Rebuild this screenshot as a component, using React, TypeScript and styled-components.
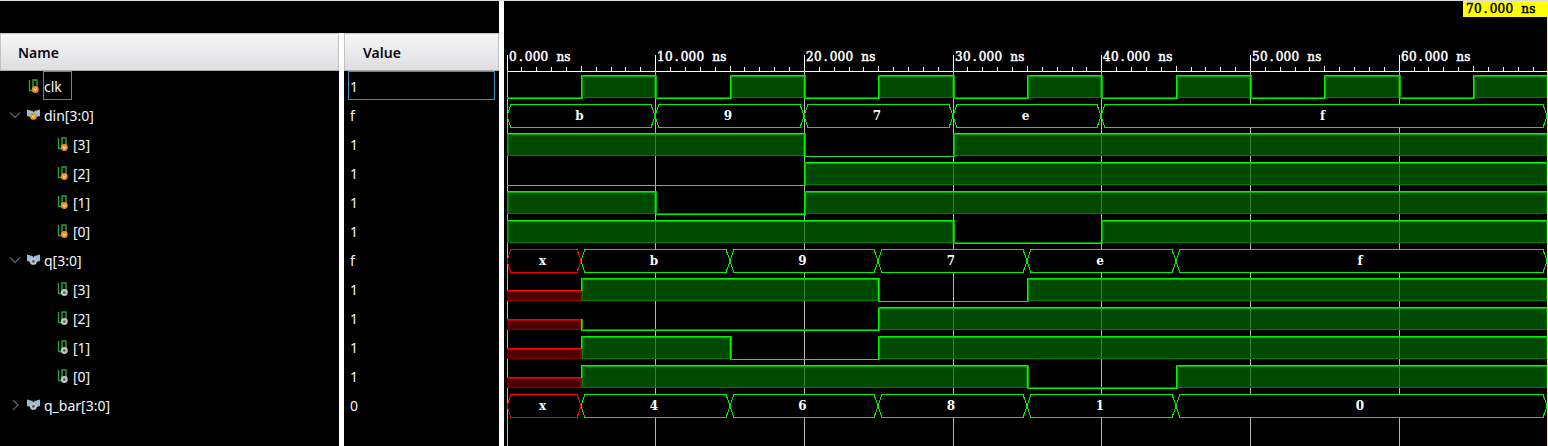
import { FC } from "react";
import styled, { createGlobalStyle } from "styled-components";

const GlobalStyle = createGlobalStyle`
  html, body {
    margin: 0;
    padding: 0;
    background: #000;
  }
`;

const Page = styled.div`
  display: flex;
  width: 1548px;
  height: 446px;
  box-sizing: border-box;
  border-top: 1px solid #dcdcdc;
  background: #000;
  overflow: hidden;
  font-family: "Noto Sans", "Open Sans", sans-serif;
`;

const TablePane = styled.div`
  display: flex;
  flex-direction: column;
  width: 499px;
  flex: none;
`;

const TopGap = styled.div`
  height: 32px;
  flex: none;
`;

const Columns = styled.div`
  display: flex;
  flex: 1;
`;

const Divider = styled.div`
  width: 5px;
  flex: none;
  background: #fff;
`;

const NameColumn = styled.div`
  width: 339px;
  flex: none;
`;

const ValueColumn = styled.div`
  width: 155px;
  flex: none;
`;

const HeaderCell = styled.div<{ $pad: number }>`
  display: flex;
  align-items: center;
  height: 38px;
  box-sizing: border-box;
  padding-left: ${({ $pad }) => $pad}px;
  border: 1px solid #c4c4c4;
  border-bottom-color: #a8a8a8;
  background: linear-gradient(180deg, #f6f6f6 0%, #dedee2 100%);
  color: #0a0a14;
  font-size: 14px;
  font-weight: 600;
`;

const Row = styled.div<{ $indent: number }>`
  display: flex;
  align-items: center;
  height: 29px;
  padding-left: ${({ $indent }) => $indent}px;
  color: #f2f6ff;
  font-size: 14px;
`;

const Caret = styled.svg`
  width: 14px;
  height: 14px;
  margin-left: 8px;
  margin-right: 4px;
  flex: none;
`;

const SignalGlyph = styled.svg`
  width: 14px;
  height: 16px;
  margin-right: 3px;
  flex: none;
`;

const NameText = styled.span<{ $selected?: boolean }>`
  display: flex;
  align-items: center;
  height: 29px;
  box-sizing: border-box;
  padding: 2px 0 0 0;
  min-width: 29px;
  border: 1px solid ${({ $selected }) => ($selected ? "#3f8fc9" : "transparent")};
`;

const ValueCell = styled.div<{ $selected?: boolean }>`
  display: flex;
  align-items: center;
  height: 29px;
  box-sizing: border-box;
  width: 147px;
  margin-left: 4px;
  padding: 2px 0 0 1px;
  color: #f2f6ff;
  font-size: 14px;
  border: 1px solid ${({ $selected }) => ($selected ? "#3f8fc9" : "transparent")};
`;

const WavePane = styled.div`
  flex: 1;
`;

const WaveSvg = styled.svg`
  display: block;
  width: 1044px;
  height: 445px;
`;

const WaveText = styled.text<{ $dark?: boolean; $bold?: boolean }>`
  font-family: "DejaVu Serif", "Liberation Mono", serif;
  font-size: 12px;
  font-weight: ${({ $bold }) => ($bold ? 700 : 400)};
  fill: ${({ $dark }) => ($dark ? "#000" : "#fff")};
  stroke: ${({ $dark }) => ($dark ? "#000" : "#fff")};
  stroke-width: ${({ $bold }) => ($bold ? 0 : 0.5)}px;
`;

type Kind = "scalar" | "bus";
type Tone = "input" | "output";
interface SignalRow {
  name: string;
  value: string;
  kind: Kind;
  tone: Tone;
  caret?: "open" | "closed";
  selected?: boolean;
}

const rows: SignalRow[] = [
  { name: "clk", value: "1", kind: "scalar", tone: "input", selected: true },
  { name: "din[3:0]", value: "f", kind: "bus", tone: "input", caret: "open" },
  { name: "[3]", value: "1", kind: "scalar", tone: "input" },
  { name: "[2]", value: "1", kind: "scalar", tone: "input" },
  { name: "[1]", value: "1", kind: "scalar", tone: "input" },
  { name: "[0]", value: "1", kind: "scalar", tone: "input" },
  { name: "q[3:0]", value: "f", kind: "bus", tone: "output", caret: "open" },
  { name: "[3]", value: "1", kind: "scalar", tone: "output" },
  { name: "[2]", value: "1", kind: "scalar", tone: "output" },
  { name: "[1]", value: "1", kind: "scalar", tone: "output" },
  { name: "[0]", value: "1", kind: "scalar", tone: "output" },
  { name: "q_bar[3:0]", value: "0", kind: "bus", tone: "output", caret: "closed" },
];

const Badge: FC<{ tone: Tone; cx: number; cy: number }> = ({ tone, cx, cy }) => (
  <g>
    <circle cx={cx} cy={cy} r={3.4} fill={tone === "input" ? "#ee8f1e" : "#c4c4c4"} />
    {tone === "input" ? (
      <path d={`M${cx - 1.3} ${cy - 1}l1.3 2.4l1.3-2.4`} fill="none" stroke="#fff2d0" strokeWidth={0.9} />
    ) : (
      <circle cx={cx} cy={cy} r={1.3} fill="#555" />
    )}
  </g>
);

const SignalIcon: FC<{ kind: Kind; tone: Tone }> = ({ kind, tone }) => (
  <SignalGlyph viewBox="0 0 14 16">
    {kind === "scalar" ? (
      <>
        <path d="M3.5 2V12.5H7V2H11V9" fill="none" stroke="#2f9f45" strokeWidth={1.4} />
        <Badge tone={tone} cx={9.3} cy={11.5} />
      </>
    ) : (
      <>
        <path d="M1 2.5L6.5 4L7.5 5.5L8.5 4L14 2.5V9L8.5 10.5H6.5L1 9Z" fill="#93bfd8" />
        <Badge tone={tone} cx={7.4} cy={9.4} />
      </>
    )}
  </SignalGlyph>
);

const tx = (ns: number) => Math.floor(507 + ns * 14.87);
const rowTop = (n: number) => 75 + 29 * n;

type Level = "0" | "1" | "x";
type Seg = [number, number, Level];

const BRIGHT = "#00f400";
const SOFT = "#00b400";
const DARK = "#007c00";

// low lines that came out thinner in the capture
const thinLow = [2, 3, 7, 9];

const BitWave: FC<{ n: number; segs: Seg[] }> = ({ n, segs }) => {
  const top = rowTop(n);
  const low = top + 23;
  const mid = top + 12;
  const levelY = (l: Level) => (l === "1" ? top : l === "x" ? mid : low);
  const thin = thinLow.includes(n);
  return (
    <g shapeRendering="crispEdges">
      {segs.map(([a, b, level], i) => {
        const x0 = tx(a);
        const x1 = tx(b);
        const w = x1 - x0;
        const prev = i > 0 ? segs[i - 1][2] : null;
        const parts = [];
        if (level === "1") {
          parts.push(
            <rect key="f" x={x0} y={top} width={w} height={23} fill="#006800" opacity={0.7} />,
            <rect key="b" x={x0} y={top + 22} width={w} height={1} fill={DARK} />,
            <rect key="r" x={x1 - 1} y={top} width={1} height={23} fill={DARK} />,
            <rect key="l" x={x0 + 1} y={top} width={1} height={23} fill={DARK} />,
            <rect key="t" x={x0} y={top} width={w} height={1} fill={BRIGHT} />,
            <rect key="t2" x={x0} y={top + 1} width={w} height={1} fill={SOFT} />,
          );
        } else if (level === "0") {
          parts.push(
            <rect key="l" x={x0} y={low} width={w} height={1} fill={thin ? "#30e030" : BRIGHT} />,
          );
          if (!thin) parts.push(<rect key="l2" x={x0} y={low - 1} width={w} height={1} fill="#008c00" />);
        } else {
          parts.push(
            <rect key="f" x={x0} y={mid} width={w} height={11} fill="#4c0000" />,
            <rect key="b" x={x0} y={mid + 10} width={w} height={1} fill="#860000" />,
            <rect key="r" x={x1 - 1} y={mid} width={1} height={11} fill="#860000" />,
            <rect key="l" x={x0 + 1} y={mid} width={1} height={11} fill="#860000" />,
            <rect key="t" x={x0} y={mid} width={w} height={1} fill="#ff0000" />,
            <rect key="t2" x={x0} y={mid + 1} width={w} height={1} fill="#b40000" />,
          );
        }
        if (prev !== null && prev !== level) {
          const y1 = Math.min(levelY(prev), levelY(level));
          const y2 = Math.max(levelY(prev), levelY(level));
          parts.push(
            <rect key="e" x={x0} y={y1} width={1} height={y2 - y1 + 1} fill={BRIGHT} />,
            <rect key="e2" x={x0 + 1} y={y1} width={1} height={y2 - y1 + 1} fill={SOFT} />,
          );
        }
        return <g key={i}>{parts}</g>;
      })}
    </g>
  );
};

const BusWave: FC<{ n: number; segs: [number, number, string][] }> = ({ n, segs }) => {
  const top = rowTop(n) + 0.5;
  const bottom = top + 23;
  const mid = top + 11.5;
  return (
    <g>
      {segs.map(([a, b, label], i) => {
        const x0 = tx(a);
        const x1 = tx(b);
        const pts = [
          [x0, mid],
          [x0 + 4, top],
          [x1 - 4, top],
          [x1, mid],
          [x1 - 4, bottom],
          [x0 + 4, bottom],
        ]
          .map((p) => p.join(","))
          .join(" ");
        return (
          <g key={i}>
            <polygon
              points={pts}
              fill="#000"
              stroke={label === "x" ? "#ff0000" : "#00f000"}
              strokeWidth={1}
              shapeRendering="crispEdges"
            />
            <WaveText $bold x={(x0 + x1) / 2 - 1.5} y={mid + 4} textAnchor="middle">
              {label}
            </WaveText>
          </g>
        );
      })}
    </g>
  );
};

// time labels sit on a fixed 7.9px cell, like the simulator's fixed font
const cellXs = (text: string, x: number) =>
  text
    .split("")
    .map((c, i) => (x + i * 7.9 + (c === "." ? 2 : 0)).toFixed(1))
    .join(" ");

const hex = (c: string) => parseInt(c, 16);

const bitSegs = (times: number[], values: string[], bit: number): Seg[] => {
  const segs: Seg[] = [];
  values.forEach((v, i) => {
    const level: Level = v === "x" ? "x" : hex(v) & (1 << bit) ? "1" : "0";
    const last = segs[segs.length - 1];
    if (last && last[2] === level) last[1] = times[i + 1];
    else segs.push([times[i], times[i + 1], level]);
  });
  return segs;
};

const busSegs = (times: number[], values: string[]): [number, number, string][] =>
  values.map((v, i) => [times[i], times[i + 1], v]);

const dinT = [0, 10, 20, 30, 40, 70];
const dinV = ["b", "9", "7", "e", "f"];
const qT = [0, 5, 15, 25, 35, 45, 70];
const qV = ["x", "b", "9", "7", "e", "f"];
const qBarV = ["x", "4", "6", "8", "1", "0"];

const clkSegs: Seg[] = Array.from({ length: 14 }, (_, i) => [i * 5, (i + 1) * 5, i % 2 ? "1" : "0"] as Seg);

const Waveform: FC = () => (
  <WaveSvg viewBox="504 1 1044 445">
    {/* ruler */}
    <rect x={507} y={71} width={1041} height={1} fill="#fff" shapeRendering="crispEdges" />
    {Array.from({ length: 71 }, (_, i) =>
      i % 10 === 0 ? null : (
        <rect
          key={i}
          x={tx(i)}
          y={i % 5 === 0 ? 66 : 67}
          width={1}
          height={i % 5 === 0 ? 5 : 4}
          fill="#fff"
          shapeRendering="crispEdges"
        />
      ),
    )}
    {[0, 10, 20, 30, 40, 50, 60].map((t) => {
      const label = `${t.toFixed(3)} ns`;
      return (
        <g key={t}>
          <rect x={tx(t)} y={55} width={1} height={391} fill="#b4b4b4" shapeRendering="crispEdges" />
          <rect x={tx(t)} y={55} width={1} height={16} fill="#fff" shapeRendering="crispEdges" />
          <WaveText x={cellXs(label, tx(t) + 2)} y={61}>
            {label}
          </WaveText>
        </g>
      );
    })}

    <BitWave n={0} segs={clkSegs} />
    <BusWave n={1} segs={busSegs(dinT, dinV)} />
    {[3, 2, 1, 0].map((bit, i) => (
      <BitWave key={bit} n={2 + i} segs={bitSegs(dinT, dinV, bit)} />
    ))}
    <BusWave n={6} segs={busSegs(qT, qV)} />
    {[3, 2, 1, 0].map((bit, i) => (
      <BitWave key={bit} n={7 + i} segs={bitSegs(qT, qV, bit)} />
    ))}
    <BusWave n={11} segs={busSegs(qT, qBarV)} />

    {/* cursor */}
    <rect x={1547} y={1} width={1} height={445} fill="#ffff00" shapeRendering="crispEdges" />
    <rect x={1463} y={1} width={85} height={16} fill="#ffff00" shapeRendering="crispEdges" />
    <WaveText $dark x={cellXs("70.000 ns", 1466)} y={13}>
      70.000 ns
    </WaveText>
  </WaveSvg>
);

const App: FC = () => (
  <>
    <GlobalStyle />
    <Page>
      <TablePane>
        <TopGap />
        <Columns>
          <NameColumn>
            <HeaderCell $pad={17}>Name</HeaderCell>
            {rows.map((row, i) => {
              const child = row.name.startsWith("[");
              return (
                <Row key={i} $indent={child ? 55 : row.caret ? 0 : 26}>
                  {row.caret && (
                    <Caret viewBox="0 0 14 14">
                      <path
                        d={row.caret === "open" ? "M2 4.5L7 9.5L12 4.5" : "M5 2L10 7L5 12"}
                        fill="none"
                        stroke="#5c5c5c"
                        strokeWidth={1.3}
                      />
                    </Caret>
                  )}
                  <SignalIcon kind={row.kind} tone={row.tone} />
                  <NameText $selected={row.selected}>{row.name}</NameText>
                </Row>
              );
            })}
          </NameColumn>
          <Divider />
          <ValueColumn>
            <HeaderCell $pad={18}>Value</HeaderCell>
            {rows.map((row, i) => (
              <ValueCell key={i} $selected={row.selected}>
                {row.value}
              </ValueCell>
            ))}
          </ValueColumn>
        </Columns>
      </TablePane>
      <Divider />
      <WavePane>
        <Waveform />
      </WavePane>
    </Page>
  </>
);

export default App;
